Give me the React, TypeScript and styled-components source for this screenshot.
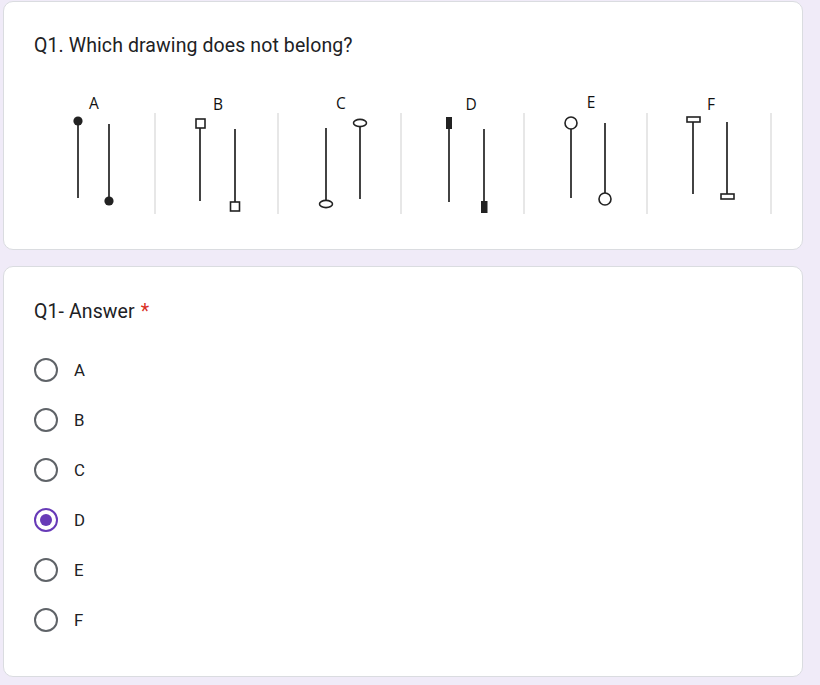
import React from "react";
import styled, { createGlobalStyle } from "styled-components";

const GlobalStyle = createGlobalStyle`
  * { box-sizing: border-box; }
  html, body { margin: 0; padding: 0; background: #f0ebf8; }
  body { font-family: Roboto, "Noto Sans", Arial, sans-serif; color: #202124; }
`;

const Page = styled.div`
  display: flex;
  flex-direction: column;
  gap: 16px;
  padding: 1px 0 0 3px;
  width: 803px;
`;

const Card = styled.section<{ $pt: number; $pb: number }>`
  background: #fff;
  border: 1px solid #dadce0;
  border-radius: 10px;
  padding: ${(p) => p.$pt}px 20px ${(p) => p.$pb}px 30px;
  display: flex;
  flex-direction: column;
`;

const Title = styled.h2`
  margin: 0;
  font-family: Roboto, Arial, sans-serif;
  font-weight: 400;
  font-size: 19.5px;
  line-height: 28px;
  letter-spacing: 0.1px;
  color: #202124;
`;

const Required = styled.span`
  color: #d93025;
  margin-left: 6px;
`;

const Figure = styled.div`
  margin-top: 29px;
  height: 130px;
  display: flex;
  & > svg {
    flex-shrink: 0;
  }
`;

const OptionList = styled.div`
  margin-top: 19px;
  display: flex;
  flex-direction: column;
`;

const OptionRow = styled.label`
  height: 50px;
  display: flex;
  align-items: center;
  gap: 16px;
  cursor: pointer;
`;

const Radio = styled.span<{ $checked?: boolean }>`
  width: 24px;
  height: 24px;
  border-radius: 50%;
  border: 2.4px solid ${(p) => (p.$checked ? "#673ab7" : "#5f6368")};
  display: flex;
  align-items: center;
  justify-content: center;
  flex-shrink: 0;
  &::after {
    content: "";
    width: 12px;
    height: 12px;
    border-radius: 50%;
    background: ${(p) => (p.$checked ? "#673ab7" : "transparent")};
  }
`;

const OptionLabel = styled.span`
  font-family: Roboto, Arial, sans-serif;
  font-size: 16.8px;
  line-height: 20px;
  color: #202124;
`;

const ink = "#222";

const Drawing: React.FC = () => (
  <svg width="746" height="130" viewBox="34 88 746 130" xmlns="http://www.w3.org/2000/svg">
    <g stroke="#cfcfcf" strokeWidth="1">
      {[155, 278, 401, 524, 647, 771].map((x) => (
        <line key={x} x1={x} y1={112} x2={x} y2={213} />
      ))}
    </g>
    <g fontFamily="'Open Sans', 'DejaVu Sans', sans-serif" fontSize="15.5" fill="#111" textAnchor="middle">
      <text x="94" y="108">A</text>
      <text x="218" y="109">B</text>
      <text x="341" y="108">C</text>
      <text x="471" y="109">D</text>
      <text x="591" y="107">E</text>
      <text x="711" y="109">F</text>
    </g>
    <g stroke={ink} strokeWidth="1.7" fill="none">
      <line x1="78" y1="120" x2="78" y2="197" />
      <line x1="109" y1="123" x2="109" y2="200" />
      <line x1="200" y1="127" x2="200" y2="200" />
      <line x1="235" y1="128" x2="235" y2="201" />
      <line x1="326" y1="127" x2="326" y2="199" />
      <line x1="360" y1="126" x2="360" y2="198" />
      <line x1="449" y1="128" x2="449" y2="201" />
      <line x1="484" y1="128" x2="484" y2="200" />
      <line x1="571" y1="128" x2="571" y2="197" />
      <line x1="605" y1="122" x2="605" y2="192" />
      <line x1="693" y1="121" x2="693" y2="193" />
      <line x1="727" y1="121" x2="727" y2="193" />
    </g>
    <g fill={ink}>
      <circle cx="78" cy="120" r="4.6" />
      <circle cx="109" cy="200" r="4.6" />
      <rect x="446" y="116" width="6" height="12" />
      <rect x="481" y="200" width="6.5" height="12" />
    </g>
    <g stroke={ink} strokeWidth="1.6" fill="#fff">
      <rect x="196" y="118" width="9" height="9" />
      <rect x="230.5" y="201" width="9" height="9" />
      <ellipse cx="326" cy="203" rx="6.5" ry="3.6" />
      <ellipse cx="360" cy="122" rx="6.5" ry="3.6" />
      <circle cx="571" cy="122" r="6" />
      <circle cx="605" cy="198" r="6" />
      <rect x="687" y="116" width="13" height="5" />
      <rect x="721" y="193" width="13" height="5" />
    </g>
  </svg>
);

const options = ["A", "B", "C", "D", "E", "F"];

export default function App() {
  return (
    <>
      <GlobalStyle />
      <Page>
        <Card $pt={30} $pb={30}>
          <Title>Q1. Which drawing does not belong?</Title>
          <Figure>
            <Drawing />
          </Figure>
        </Card>
        <Card $pt={31} $pb={31}>
          <Title>
            Q1- Answer<Required>*</Required>
          </Title>
          <OptionList>
            {options.map((o) => (
              <OptionRow key={o}>
                <Radio $checked={o === "D"} />
                <OptionLabel>{o}</OptionLabel>
              </OptionRow>
            ))}
          </OptionList>
        </Card>
      </Page>
    </>
  );
}
